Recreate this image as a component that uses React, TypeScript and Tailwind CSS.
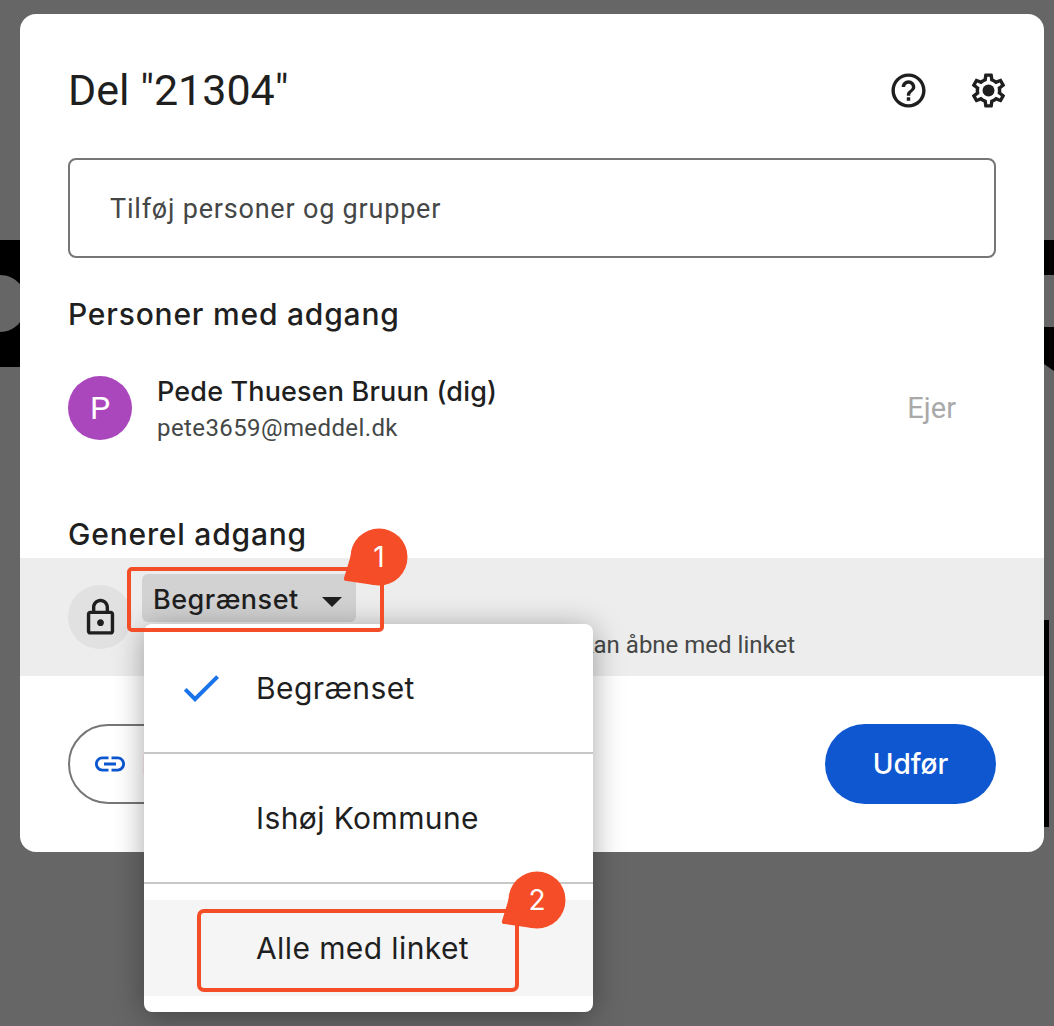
import { MdCheck, MdHelpOutline, MdLink, MdOutlineLock, MdArrowDropDown } from "react-icons/md";

function GearIcon() {
  return (
    <svg viewBox="0 0 24 24" className="h-[41px] w-[41px]" fill="#1f1f1f">
      <path d="M19.43 12.98c.04-.32.07-.64.07-.98 0-.34-.03-.66-.07-.98l2.11-1.65c.19-.15.24-.42.12-.64l-2-3.46c-.09-.16-.26-.25-.44-.25-.06 0-.12.02-.17.04l-2.49 1c-.52-.4-1.08-.73-1.69-.98l-.38-2.65C14.46 2.18 14.25 2 14 2h-4c-.25 0-.46.18-.49.42l-.38 2.65c-.61.25-1.17.59-1.69.98l-2.49-1c-.06-.02-.12-.04-.18-.04-.17 0-.34.09-.43.25l-2 3.46c-.13.22-.07.49.12.64l2.11 1.65c-.04.32-.07.65-.07.98 0 .33.03.66.07.98l-2.11 1.65c-.19.15-.24.42-.12.64l2 3.46c.09.16.26.25.44.25.06 0 .12-.02.17-.04l2.49-1c.52.4 1.08.73 1.69.98l.38 2.65c.03.24.24.42.49.42h4c.25 0 .46-.18.49-.42l.38-2.65c.61-.25 1.17-.59 1.69-.98l2.49 1c.06.02.12.04.18.04.17 0 .34-.09.43-.25l2-3.46c.12-.22.07-.49-.12-.64l-2.11-1.65zm-1.98-1.71c.04.31.05.52.05.73 0 .21-.02.43-.05.73l-.14 1.13.89.7 1.08.84-.7 1.21-1.27-.51-1.04-.42-.9.68c-.43.32-.84.56-1.25.73l-1.06.43-.16 1.13-.2 1.35h-1.4l-.19-1.35-.16-1.13-1.06-.43c-.43-.18-.83-.41-1.23-.71l-.91-.7-1.06.43-1.27.51-.7-1.21 1.08-.84.89-.7-.14-1.13c-.03-.31-.05-.54-.05-.74s.02-.43.05-.73l.14-1.13-.89-.7-1.08-.84.7-1.21 1.27.51 1.04.42.9-.68c.43-.32.84-.56 1.25-.73l1.06-.43.16-1.13.2-1.35h1.39l.19 1.35.16 1.13 1.06.43c.43.18.83.41 1.23.71l.91.7 1.06-.43 1.27-.51.7 1.21-1.07.85-.89.7.14 1.13z" />
      <circle cx="12" cy="12" r="3.5" />
    </svg>
  );
}

function Bubble({ n, className }: { n: string; className: string }) {
  return (
    <div className={`absolute h-[60px] w-[66px] ${className}`}>
      <svg viewBox="0 0 66 60" className="absolute inset-0 h-full w-full" fill="#f54d27">
        <circle cx="37" cy="30" r="28.5" />
        <path d="M9 28L2 51C1.5 53 3 54.5 5 54L32 58Z" />
      </svg>
      <span className="absolute left-[8px] top-0 flex h-[60px] w-[58px] items-center justify-center font-['Inter',sans-serif] text-[28px] text-white">
        {n}
      </span>
    </div>
  );
}

export default function App() {
  return (
    <div className="relative h-[1026px] w-[1054px] overflow-hidden bg-[#666666] font-['Inter',sans-serif] text-[#1f1f1f]">
      {/* big letters of the page behind the dialog */}
      <svg className="absolute inset-0 h-full w-full" viewBox="0 0 1054 1026">
        <path d="M0 240H20V367H0V332C8 332 16 328 20 322V284C14 278 8 275 0 275Z" fill="#000" />
        <path d="M1044 240H1054V275H1044Z M1044 327H1054V371L1044 364Z M1044 620H1049V827H1044Z" fill="#000" />
      </svg>

      <div className="ml-[20px] pt-[14px]">
        <div className="flex h-[838px] w-[1024px] flex-col rounded-[16px] bg-white">
          <div className="flex h-[144px] items-start justify-between px-[48px] pt-[49px]">
            <h1 className="font-['Roboto',sans-serif] text-[43px] leading-[54px]">Del "21304"</h1>
            <div className="mr-[-13px] mt-[7px] flex items-center gap-[39px]">
              <MdHelpOutline size={41} color="#1f1f1f" />
              <GearIcon />
            </div>
          </div>

          <div className="mx-[48px] flex h-[100px] items-center rounded-[8px] border-2 border-[#747775] pl-[40px] pt-[2px] font-['Roboto',sans-serif] text-[27px] tracking-[0.8px] text-[#444746]">
            Tilføj personer og grupper
          </div>

          <h2 className="ml-[48px] mt-[36px] text-[30px] font-medium leading-[40px] tracking-[0.8px]">Personer med adgang</h2>

          <div className="mx-[48px] mt-[42px] flex h-[64px] items-center">
            <div className="flex h-[64px] w-[64px] items-center justify-center rounded-full bg-[#ab47bc] font-['Roboto',sans-serif] text-[32px] text-white">
              P
            </div>
            <div className="ml-[25px] flex-1">
              <div className="mt-[4px] text-[27px] font-medium leading-[36px] tracking-[0.15px]">Pede Thuesen Bruun (dig)</div>
              <div className="font-['Roboto',sans-serif] text-[24px] leading-[36px] tracking-[0.4px] text-[#444746]">pete3659@meddel.dk</div>
            </div>
            <span className="mr-[40px] mt-[2px] font-['Roboto',sans-serif] text-[29px] text-[#a9a9a9]">Ejer</span>
          </div>

          <h2 className="ml-[48px] mt-[74px] text-[30px] font-medium leading-[40px] tracking-[0.8px]">Generel adgang</h2>

          <div className="mt-[4px] flex h-[118px] bg-[#ededed] pl-[48px]">
            <div className="mt-[27px] flex h-[64px] w-[64px] items-center justify-center rounded-full bg-[#e1e1e1]">
              <MdOutlineLock size={41} color="#1f1f1f" />
            </div>
            <div className="ml-[10px] flex w-[653px] flex-col">
              <div className="mt-[16px] flex h-[48px] w-[214px] items-center justify-between rounded-[6px] bg-[#d2d2d2] pl-[11px] text-[27px] font-medium tracking-[0.5px]">
                <span className="mt-[4px]">Begrænset</span>
                <MdArrowDropDown size={48} color="#1f1f1f" className="mt-[6px]" />
              </div>
              <div className="mt-[8px] flex justify-end whitespace-nowrap font-['Roboto',sans-serif] text-[24px] leading-[30px] text-[#444746]">
                Det er kun personer med adgang, der kan åbne med linket
              </div>
            </div>
          </div>

          <div className="flex flex-1 items-start justify-between px-[48px] pt-[48px]">
            <div className="flex h-[80px] w-[330px] items-center gap-[14px] rounded-full border-2 border-[#747775] pl-[22px] text-[26px] font-medium text-[#0b57d0]">
              <MdLink size={36} color="#0b57d0" />
              Kopiér link
            </div>
            <div className="flex h-[80px] w-[171px] items-center justify-center rounded-full bg-[#0f57d0] text-[28px] font-medium text-white">
              Udfør
            </div>
          </div>
        </div>
      </div>

      {/* open dropdown */}
      <div className="absolute left-[144px] top-[624px] flex h-[388px] w-[449px] flex-col rounded-[8px] bg-white text-[30px] tracking-[0.4px] shadow-[0_4px_30px_rgba(0,0,0,0.35)]">
        <div className="relative flex h-[128px] items-center pl-[112px]">
          <MdCheck size={48} color="#1a73e8" className="absolute left-[33px] top-[40px]" />
          Begrænset
        </div>
        <div className="h-[2px] bg-[#c7c7c7]" />
        <div className="flex h-[128px] items-center pl-[112px]">Ishøj Kommune</div>
        <div className="h-[2px] bg-[#c7c7c7]" />
        <div className="mt-[16px] flex h-[96px] items-center bg-[#f5f5f5] pl-[112px]">Alle med linket</div>
      </div>

      {/* tutorial annotations */}
      <div className="absolute left-[127px] top-[567px] h-[65px] w-[257px] rounded-[5px] border-[4px] border-[#f54d27]" />
      <Bubble n="1" className="left-[342px] top-[527px]" />
      <div className="absolute left-[197px] top-[909px] h-[83px] w-[322px] rounded-[7px] border-[4px] border-[#f54d27]" />
      <Bubble n="2" className="left-[500px] top-[870px]" />
    </div>
  );
}
